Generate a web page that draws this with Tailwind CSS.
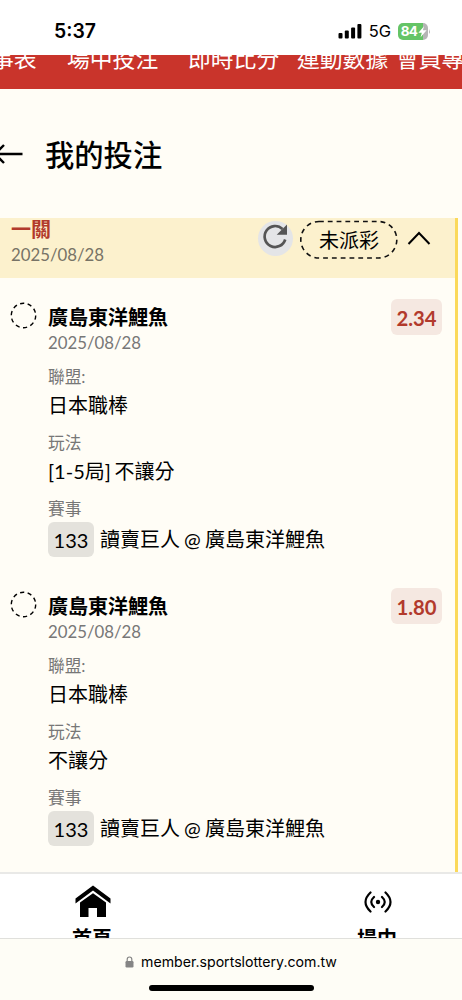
<!DOCTYPE html>
<html lang="zh-Hant">
<head>
  <meta charset="UTF-8" />
  <meta name="viewport" content="width=device-width, initial-scale=1" />
  <title>我的投注</title>
  <script src="https://cdn.jsdelivr.net/npm/@tailwindcss/browser@4"></script>
</head>
<body class="w-[462px] h-[1000px] overflow-hidden flex flex-col bg-[#fffdf6] text-black font-['Lato','Noto_Sans_CJK_TC',sans-serif]">
  <!-- Status bar -->
  <div class="h-[55px] shrink-0 bg-white flex items-start justify-between pl-[54px] pr-[31px] pt-[19px] font-['Inter',sans-serif]">
    <span class="text-[19.4px] leading-6 font-semibold">5:37</span>
    <div class="flex items-center h-6">
      <svg class="w-6 h-4 mr-[7px]" viewBox="0 0 24 16">
        <rect x="0.5" y="10" width="4" height="5.5" rx="1" />
        <rect x="6.8" y="7.5" width="4" height="8" rx="1" />
        <rect x="13.1" y="4.5" width="4" height="11" rx="1" />
        <rect x="19.4" y="1" width="4" height="14.5" rx="1" />
      </svg>
      <span class="text-[16.5px] leading-6 mr-[7px]">5G</span>
      <svg class="w-[33px] h-[17px]" viewBox="0 0 33 17">
        <path d="M5 0H25v17H5a5 5 0 0 1-5-5V5a5 5 0 0 1 5-5z" fill="#65c466" />
        <path d="M25 0a5 5 0 0 1 5 5v7a5 5 0 0 1-5 5z" fill="#b5b5b5" />
        <path d="M31 6q1.8 2.5 0 5z" fill="#b5b5b5" />
        <text x="2.8" y="13.4" font-size="13.5" font-weight="700" fill="#fff" textLength="17">84</text>
        <path d="M26 3.2l-5.6 6.5h3.4l-1.2 4.5 6-6.9h-3.7z" fill="#fff" />
      </svg>
    </div>
  </div>

  <!-- Scrolled site menu -->
  <nav class="h-[34px] shrink-0 overflow-hidden bg-[#c9342b] text-white text-[22.8px] leading-[34px] whitespace-nowrap">
    <div class="flex -mt-[14px] -ml-[9px] w-[520px]">
      <span class="w-[76px] shrink-0">事表</span>
      <span class="w-[121px] shrink-0">場中投注</span>
      <span class="w-[109px] shrink-0">即時比分</span>
      <span class="w-[99px] shrink-0">運動數據</span>
      <span class="shrink-0">會員專區</span>
    </div>
  </nav>

  <header class="h-[129px] shrink-0 flex items-start pt-[45px]">
    <svg class="w-[23px] h-5 mt-[10px] mr-[22px]" viewBox="0 0 23 20" fill="none" stroke="#000" stroke-width="2.4">
      <path d="M-5 10H22.5M4 1L-5 10L4 19" />
    </svg>
    <h1 class="text-[29.3px] leading-[42px] font-medium">我的投注</h1>
  </header>

  <main class="h-[654px] w-[458px] shrink-0 border-r-[3px] border-[#fbd95b]">
    <div class="h-[60px] bg-[#fcf1cd] flex items-start">
      <div class="w-[247px] shrink-0 pl-[11px]">
        <div class="text-[20px] leading-[23px] font-bold text-[#b23a2c]">一關</div>
        <div class="mt-[2px] text-[16.8px] leading-6 text-[#777366]">2025/08/28</div>
      </div>
      <div class="size-[35px] shrink-0 mt-[3px] ml-[11px] rounded-full bg-[#e4e5e7]">
        <svg class="size-[35px]" viewBox="0 0 35 35" fill="none" stroke="#555" stroke-width="2.7">
          <path d="M27.2 18.5A10.5 10.5 0 1 1 24.5 8" />
          <path d="M29 3.5V13.8H18.7z" fill="#555" stroke="none" />
        </svg>
      </div>
      <div class="relative w-[98px] h-[38px] shrink-0 mt-[2px] ml-[7px] text-center text-[20px] leading-[40px]">
        <svg class="absolute inset-0 w-[98px] h-[39px]" viewBox="0 0 98 39" fill="none" stroke="#111" stroke-width="1.6" stroke-dasharray="4.8 4">
          <rect x="0.8" y="1.5" width="96" height="36.5" rx="18.2" />
        </svg>
        未派彩
      </div>
      <svg class="w-6 h-4 shrink-0 mt-[12px] ml-[9px]" viewBox="0 0 24 16" fill="none" stroke="#000" stroke-width="2">
        <path d="M1.5 14L12 3L22.5 14" />
      </svg>
    </div>

    <section class="flex items-start h-[289px] pt-[25px] pl-[10px] pr-[13px]">
      <svg class="size-[27px] mr-[11px] -mt-[1px]" viewBox="0 0 27 27" fill="none" stroke="#000" stroke-width="1.4" stroke-dasharray="4.2 3.47">
        <circle cx="13.5" cy="13.5" r="12.2" />
      </svg>
      <div class="grow text-[20px] leading-7">
        <div class="font-bold">廣島東洋鯉魚</div>
        <div class="text-[16.8px] leading-6 text-[#777]">2025/08/28</div>
        <div class="mt-[10px] text-[16.7px] leading-6 text-[#777]">聯盟:</div>
        <div class="mt-[2px]">日本職棒</div>
        <div class="mt-3 text-[16.7px] leading-6 text-[#777]">玩法</div>
        <div class="mt-[2px] [word-spacing:-1.5px]">[1-5局] 不讓分</div>
        <div class="mt-3 text-[16.7px] leading-6 text-[#777]">賽事</div>
        <div class="mt-[1px] flex items-center leading-[35px]">
          <span class="w-[46px] h-[35px] leading-[37px] rounded-md bg-[#e4e2dc] text-center mr-[6px]">133</span>
          <span class="leading-[37px] -my-px [word-spacing:-1px]">讀賣巨人 @ 廣島東洋鯉魚</span>
        </div>
      </div>
      <div class="w-[51px] h-9 -mt-[4px] rounded-md bg-[#f5e8e1] text-center text-[20.3px] leading-[38px] font-bold text-[#b23a2c]">2.34</div>
    </section>

    <section class="flex items-start h-[289px] pt-[25px] pl-[10px] pr-[13px]">
      <svg class="size-[27px] mr-[11px] -mt-[1px]" viewBox="0 0 27 27" fill="none" stroke="#000" stroke-width="1.4" stroke-dasharray="4.2 3.47">
        <circle cx="13.5" cy="13.5" r="12.2" />
      </svg>
      <div class="grow text-[20px] leading-7">
        <div class="font-bold">廣島東洋鯉魚</div>
        <div class="text-[16.8px] leading-6 text-[#777]">2025/08/28</div>
        <div class="mt-[10px] text-[16.7px] leading-6 text-[#777]">聯盟:</div>
        <div class="mt-[2px]">日本職棒</div>
        <div class="mt-3 text-[16.7px] leading-6 text-[#777]">玩法</div>
        <div class="mt-[2px]">不讓分</div>
        <div class="mt-3 text-[16.7px] leading-6 text-[#777]">賽事</div>
        <div class="mt-[1px] flex items-center leading-[35px]">
          <span class="w-[46px] h-[35px] leading-[37px] rounded-md bg-[#e4e2dc] text-center mr-[6px]">133</span>
          <span class="leading-[37px] -my-px [word-spacing:-1px]">讀賣巨人 @ 廣島東洋鯉魚</span>
        </div>
      </div>
      <div class="w-[51px] h-9 -mt-[4px] rounded-md bg-[#f5e8e1] text-center text-[20.3px] leading-[38px] font-bold text-[#b23a2c]">1.80</div>
    </section>
  </main>

  <!-- Bottom tabs, cut off by the browser bar -->
  <nav class="h-[66px] shrink-0 overflow-hidden bg-white border-t-2 border-[#e9e9e7] flex justify-between pl-[72px] pr-[65px] text-[20px] leading-7 font-bold">
    <div class="w-10 shrink-0 flex flex-col items-center">
      <svg class="w-[36px] h-[33px] shrink-0 mt-[11px] ml-px" viewBox="0 0 36 33">
        <path d="M0.5 13.5L18 0.5L35.5 13.5V18.5L18 5.5L0.5 18.5z" />
        <path d="M5 17.5L18 8.3L31 17.5V32H22V23H13.5V32H5z" />
      </svg>
      <span class="shrink-0 mt-[6px]">首頁</span>
    </div>
    <div class="w-10 shrink-0 flex flex-col items-center">
      <svg class="w-7 h-[22px] shrink-0 mt-[17px] ml-[2px]" viewBox="0 0 28 22" fill="none" stroke="#000" stroke-width="2.2" stroke-linecap="round">
        <path d="M6.5 1.5Q-3.5 11 6.5 20.5M21.5 1.5Q31.5 11 21.5 20.5M10 6Q4.5 11 10 16M18 6Q23.5 11 18 16" />
        <circle cx="14" cy="11" r="2.2" fill="#000" stroke="none" />
      </svg>
      <span class="shrink-0 mt-[11px]">場中</span>
    </div>
  </nav>

  <footer class="h-[62px] shrink-0 border-t border-[#e0e0dc] bg-[#fefdf6] flex flex-col items-center font-['Inter',sans-serif]">
    <div class="flex items-center h-6 mt-[11px] text-[14.15px]">
      <svg class="w-[9px] h-3 mr-[7px]" viewBox="0 0 9 12">
        <rect x="0.5" y="5" width="8" height="6.5" rx="1.2" fill="#858585" />
        <path d="M2.2 5.5V3.3a2.3 2.3 0 0 1 4.6 0V5.5" fill="none" stroke="#858585" stroke-width="1.2" />
      </svg>
      <span>member.sportslottery.com.tw</span>
    </div>
    <div class="w-[165px] h-[6px] mt-[11px] rounded-full bg-black"></div>
  </footer>
</body>
</html>
